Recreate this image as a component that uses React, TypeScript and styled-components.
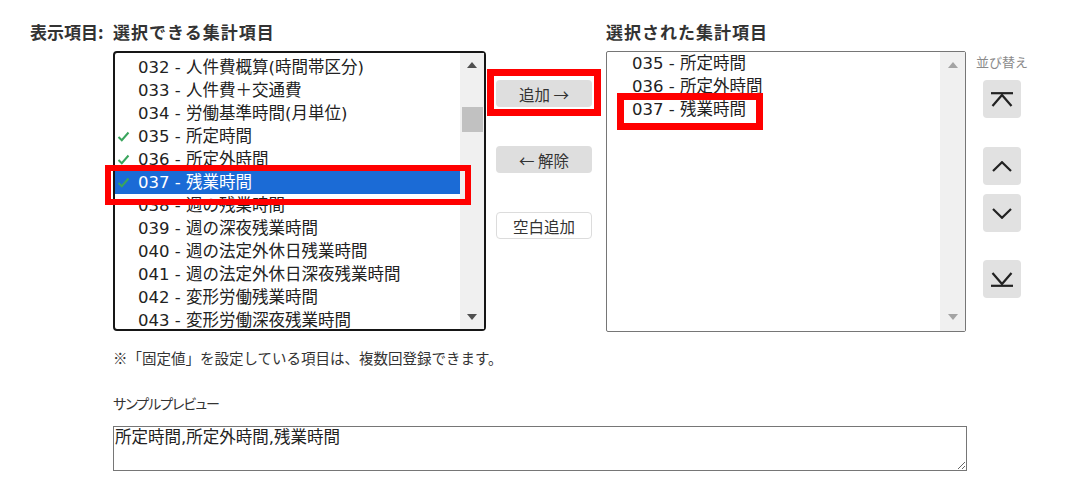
import React from "react";
import styled, { createGlobalStyle } from "styled-components";

const GlobalStyle = createGlobalStyle`
  html, body { margin: 0; padding: 0; background: #fff; }
  body { font-family: "DejaVu Sans", "Noto Sans CJK JP", sans-serif; color: #333; }
  * { box-sizing: border-box; }
`;

const Page = styled.div`
  display: flex;
  padding: 21px 0 0 30px;
`;

const FieldLabel = styled.div`
  width: 83px;
  font-family: "Noto Sans CJK JP", sans-serif;
  font-size: 17px;
  font-weight: 700;
  line-height: 22px;
  color: #333;
  white-space: nowrap;
`;

const FieldBody = styled.div`
  display: flex;
  flex-direction: column;
`;

const Picker = styled.div`
  display: grid;
  grid-template-columns: 373px 120px 360px auto;
  grid-template-rows: 30px auto;
  align-items: start;
`;

const Heading = styled.h2`
  margin: 0;
  font-family: "Noto Sans CJK JP", sans-serif;
  font-size: 17px;
  font-weight: 700;
  line-height: 22px;
  letter-spacing: 1px;
  color: #333;
  white-space: nowrap;
`;

const ListBox = styled.div<{ $focused?: boolean }>`
  position: relative;
  display: flex;
  height: ${(p) => (p.$focused ? "280px" : "281px")};
  border: ${(p) => (p.$focused ? "2px solid #161616" : "1px solid #767676")};
  border-radius: ${(p) => (p.$focused ? "4px" : "2px")};
  background: #fff;
`;

const Viewport = styled.div<{ $offset: number }>`
  flex: 1;
  overflow: hidden;
  padding-top: ${(p) => p.$offset}px;
`;

const Row = styled.div<{ $selected?: boolean }>`
  display: flex;
  align-items: center;
  height: 23px;
  font-size: 16.5px;
  line-height: 23px;
  white-space: nowrap;
  color: ${(p) => (p.$selected ? "#fff" : "#222")};
  background: ${(p) => (p.$selected ? "#1b6bd6" : "transparent")};
`;

const CheckCell = styled.span<{ $width: number }>`
  display: flex;
  align-items: center;
  width: ${(p) => p.$width}px;
  flex: none;
  padding-left: 2px;
`;

const Scrollbar = styled.div<{ $width: number }>`
  position: relative;
  width: ${(p) => p.$width}px;
  flex: none;
  display: flex;
  flex-direction: column;
  justify-content: space-between;
  background: #f0f0f0;
`;

const ArrowCell = styled.div<{ $height: number }>`
  display: flex;
  align-items: center;
  justify-content: center;
  height: ${(p) => p.$height}px;
`;

const Thumb = styled.div<{ $top: number }>`
  position: absolute;
  top: ${(p) => p.$top}px;
  left: 2px;
  right: 1px;
  height: 25px;
  background: #c1c1c1;
`;

const Callout = styled.div<{ $top: number; $left: number; $w: number; $h: number; $b: number }>`
  position: absolute;
  top: ${(p) => p.$top}px;
  left: ${(p) => p.$left}px;
  width: ${(p) => p.$w}px;
  height: ${(p) => p.$h}px;
  border: ${(p) => p.$b}px solid #ff0000;
  pointer-events: none;
`;

const ButtonCol = styled.div`
  display: flex;
  flex-direction: column;
  gap: 39px;
  padding: 29px 0 0 10px;
`;

const ButtonWrap = styled.div`
  position: relative;
  width: 96px;
`;

const ActionButton = styled.button<{ $outline?: boolean }>`
  display: flex;
  align-items: center;
  justify-content: center;
  width: 96px;
  height: 27px;
  padding: 0;
  font-family: "Noto Sans CJK JP", sans-serif;
  font-size: 15.5px;
  color: #333;
  background: ${(p) => (p.$outline ? "#fff" : "#dedede")};
  border: ${(p) => (p.$outline ? "1px solid #dcdcdc" : "none")};
  border-radius: 4px;
`;

const SortCol = styled.div`
  display: flex;
  flex-direction: column;
  margin-left: 10px;
  padding-top: 3px;
`;

const SortLabel = styled.div`
  font-family: "Noto Sans CJK JP", sans-serif;
  font-size: 13px;
  line-height: 15px;
  color: #8a8a8a;
  white-space: nowrap;
  margin-bottom: 11px;
`;

const SortButton = styled.button<{ $gap: number }>`
  display: flex;
  align-items: center;
  justify-content: center;
  width: 38px;
  height: 38px;
  margin: ${(p) => p.$gap}px 0 0 7px;
  padding: 0;
  border: none;
  border-radius: 4px;
  background: #e1e1e1;
`;

const Note = styled.p`
  margin: 16px 0 0;
  font-family: "Noto Sans CJK JP", sans-serif;
  font-size: 14.5px;
  line-height: 20px;
  color: #333;
`;

const PreviewLabel = styled.div`
  margin-top: 25px;
  font-family: "Noto Sans CJK JP", sans-serif;
  font-size: 14px;
  line-height: 20px;
  letter-spacing: -1px;
  color: #333;
  font-feature-settings: "palt";
`;

const Preview = styled.textarea`
  display: block;
  width: 854px;
  height: 45px;
  margin-top: 13px;
  padding: 1px 1px;
  font-family: "DejaVu Sans", "Noto Sans CJK JP", sans-serif;
  font-size: 16.5px;
  line-height: 20px;
  color: #222;
  border: 1px solid #767676;
  border-radius: 0;
  resize: both;
  outline: none;
`;

const Check = () => (
  <svg width="13" height="11" viewBox="0 0 13 11">
    <polyline points="1.5,6 4.8,9.2 11.5,1.5" fill="none" stroke="#3aa55d" strokeWidth="2" />
  </svg>
);

const Tri = ({ up, color }: { up?: boolean; color: string }) => (
  <svg width="10" height="6" viewBox="0 0 10 6">
    <polygon points={up ? "0,6 10,6 5,0" : "0,0 10,0 5,6"} fill={color} />
  </svg>
);

const IconTop = () => (
  <svg width="22" height="15" viewBox="0 0 22 15">
    <line x1="0" y1="1.2" x2="22" y2="1.2" stroke="#222" strokeWidth="2.2" />
    <polyline points="1.5,14 11,3 20.5,14" fill="none" stroke="#222" strokeWidth="2.2" />
  </svg>
);
const IconBottom = () => (
  <svg width="22" height="15" viewBox="0 0 22 15">
    <polyline points="1.5,1 11,12 20.5,1" fill="none" stroke="#222" strokeWidth="2.2" />
    <line x1="0" y1="13.8" x2="22" y2="13.8" stroke="#222" strokeWidth="2.2" />
  </svg>
);
const IconUp = () => (
  <svg width="20" height="11" viewBox="0 0 20 11">
    <polyline points="1,10 10,1.2 19,10" fill="none" stroke="#222" strokeWidth="2.2" />
  </svg>
);
const IconDown = () => (
  <svg width="20" height="11" viewBox="0 0 20 11">
    <polyline points="1,1 10,9.8 19,1" fill="none" stroke="#222" strokeWidth="2.2" />
  </svg>
);

type Item = { code: string; name: string; checked?: boolean; selected?: boolean };

const available: Item[] = [
  { code: "032", name: "人件費概算(時間帯区分)" },
  { code: "033", name: "人件費＋交通費" },
  { code: "034", name: "労働基準時間(月単位)" },
  { code: "035", name: "所定時間", checked: true },
  { code: "036", name: "所定外時間", checked: true },
  { code: "037", name: "残業時間", checked: true, selected: true },
  { code: "038", name: "週の残業時間" },
  { code: "039", name: "週の深夜残業時間" },
  { code: "040", name: "週の法定外休日残業時間" },
  { code: "041", name: "週の法定外休日深夜残業時間" },
  { code: "042", name: "変形労働残業時間" },
  { code: "043", name: "変形労働深夜残業時間" },
];

const chosen: Item[] = [
  { code: "035", name: "所定時間" },
  { code: "036", name: "所定外時間" },
  { code: "037", name: "残業時間" },
];

export default function App() {
  return (
    <>
      <GlobalStyle />
      <Page>
        <FieldLabel>表示項目:</FieldLabel>
        <FieldBody>
          <Picker>
            <Heading>選択できる集計項目</Heading>
            <div />
            <Heading>選択された集計項目</Heading>
            <div />

            <ListBox $focused>
              <Viewport $offset={2.5}>
                {available.map((it) => (
                  <Row key={it.code} $selected={it.selected}>
                    <CheckCell $width={23}>{it.checked && <Check />}</CheckCell>
                    {it.code} - {it.name}
                  </Row>
                ))}
              </Viewport>
              <Scrollbar $width={24}>
                <ArrowCell $height={24}>
                  <Tri up color="#505050" />
                </ArrowCell>
                <Thumb $top={54} />
                <ArrowCell $height={24}>
                  <Tri color="#505050" />
                </ArrowCell>
              </Scrollbar>
              <Callout $top={112} $left={-10} $w={366} $h={40} $b={6} />
            </ListBox>

            <ButtonCol>
              <ButtonWrap>
                <ActionButton>追加 →</ActionButton>
                <Callout $top={-11} $left={-9} $w={114} $h={47} $b={7} />
              </ButtonWrap>
              <ActionButton>← 解除</ActionButton>
              <ActionButton $outline>空白追加</ActionButton>
            </ButtonCol>

            <ListBox>
              <Viewport $offset={0}>
                {chosen.map((it) => (
                  <Row key={it.code}>
                    <CheckCell $width={25} />
                    {it.code} - {it.name}
                  </Row>
                ))}
              </Viewport>
              <Scrollbar $width={25}>
                <ArrowCell $height={26}>
                  <Tri up color="#a3a3a3" />
                </ArrowCell>
                <ArrowCell $height={28}>
                  <Tri color="#a3a3a3" />
                </ArrowCell>
              </Scrollbar>
              <Callout $top={41} $left={10} $w={146} $h={37} $b={7} />
            </ListBox>

            <SortCol>
              <SortLabel>並び替え</SortLabel>
              <SortButton $gap={0}>
                <IconTop />
              </SortButton>
              <SortButton $gap={29}>
                <IconUp />
              </SortButton>
              <SortButton $gap={9}>
                <IconDown />
              </SortButton>
              <SortButton $gap={28}>
                <IconBottom />
              </SortButton>
            </SortCol>
          </Picker>

          <Note>※「固定値」を設定している項目は、複数回登録できます。</Note>
          <PreviewLabel>サンプルプレビュー</PreviewLabel>
          <Preview readOnly value="所定時間,所定外時間,残業時間" />
        </FieldBody>
      </Page>
    </>
  );
}
